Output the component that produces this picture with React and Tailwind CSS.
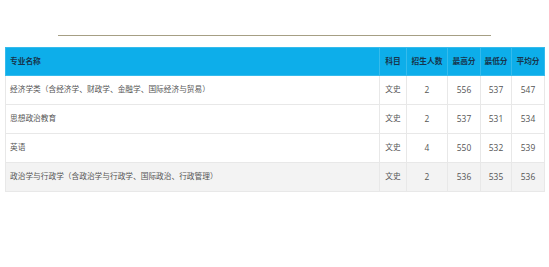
import React from "react";

const rows = [
  ["经济学类（含经济学、财政学、金融学、国际经济与贸易）", "文史", "2", "556", "537", "547"],
  ["思想政治教育", "文史", "2", "537", "531", "534"],
  ["英语", "文史", "4", "550", "532", "539"],
  ["政治学与行政学（含政治学与行政学、国际政治、行政管理）", "文史", "2", "536", "535", "536"],
];

const heads = ["专业名称", "科目", "招生人数", "最高分", "最低分", "平均分"];

export default function App() {
  return (
    <div
      className="w-[549px] h-[267px] bg-white overflow-hidden"
      style={{ fontFamily: '"Open Sans", "Noto Sans CJK SC", sans-serif' }}
    >
      <div className="pt-[35px] pl-[58px]">
        <div className="w-[433px] h-px bg-[#a69f84]" />
      </div>
      <div className="pt-[11px] pl-[5px]">
        <table className="w-[539px] border-collapse table-fixed text-[7.7px] leading-none">
          <colgroup>
            <col className="w-[374px]" />
            <col className="w-[27px]" />
            <col className="w-[41px]" />
            <col className="w-[33px]" />
            <col className="w-[31px]" />
            <col className="w-[33px]" />
          </colgroup>
          <thead>
            <tr className="h-[28px] bg-[#0daeea]">
              {heads.map((h, i) => (
                <th
                  key={i}
                  className={`font-bold text-[#17354d] border border-[#35bbec] ${
                    i === 0 ? "text-left pl-[4px]" : "text-center"
                  }`}
                >
                  {h}
                </th>
              ))}
            </tr>
          </thead>
          <tbody>
            {rows.map((r, ri) => (
              <tr
                key={ri}
                className={`h-[29px] ${ri === 3 ? "bg-[#f3f3f3]" : "bg-white"}`}
              >
                {r.map((c, ci) => (
                  <td
                    key={ci}
                    className={`text-[#555555] border border-[#e8e8e8] ${
                      ci === 0 ? "text-left pl-[4px]" : "text-center"
                    } ${ci >= 2 ? "text-[8.4px]" : ""}`}
                  >
                    {c}
                  </td>
                ))}
              </tr>
            ))}
          </tbody>
        </table>
      </div>
    </div>
  );
}
